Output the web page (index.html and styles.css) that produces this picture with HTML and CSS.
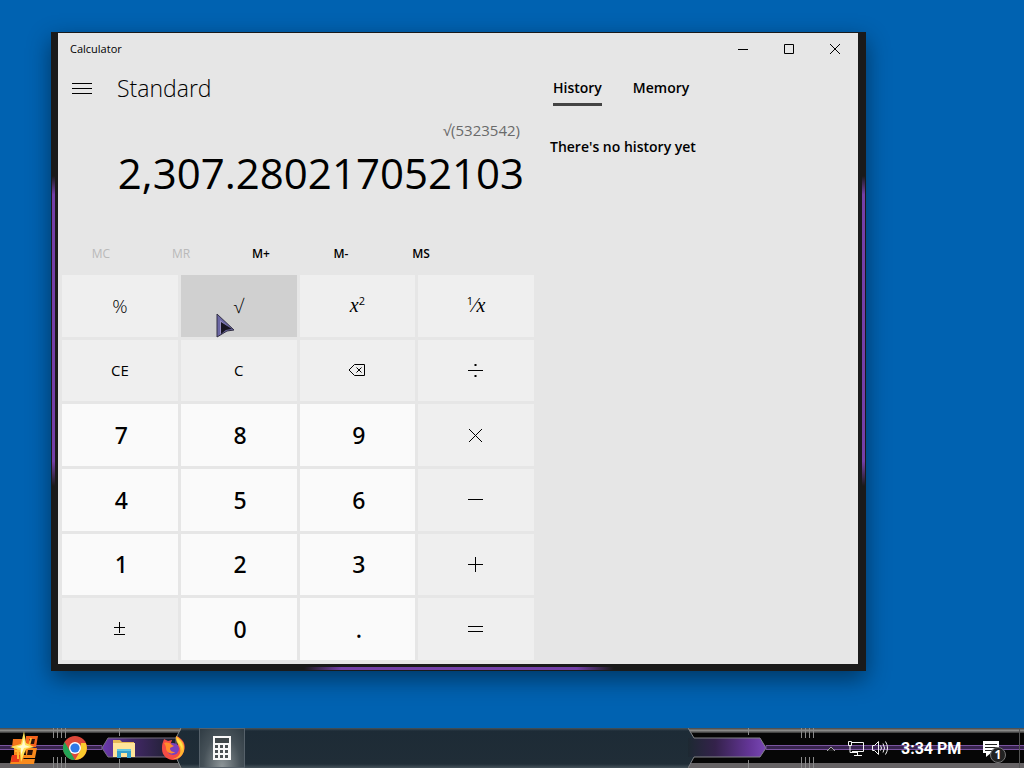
FILE: index.html
```html
<!DOCTYPE html>
<html lang="en">
<head>
    <meta charset="UTF-8">
    <meta name="viewport" content="width=device-width, initial-scale=1.0">
    <title>Calculator</title>
    <link rel="stylesheet" href="styles.css">
</head>
<body>
    <main class="desktop">
        <section class="window">
            <div class="window-body">
                <header class="titlebar">
                    <h1 class="window-title">Calculator</h1>
                    <div class="window-buttons">
                        <button type="button" aria-label="Minimize">
                            <svg width="12" height="12" viewBox="0 0 12 12"><path d="M1 6.5h10"/></svg>
                        </button>
                        <button type="button" aria-label="Maximize">
                            <svg width="12" height="12" viewBox="0 0 12 12"><path d="M1.5 1.5h9v9h-9z"/></svg>
                        </button>
                        <button type="button" aria-label="Close">
                            <svg width="12" height="12" viewBox="0 0 12 12"><path d="M1 1l10 10M11 1L1 11"/></svg>
                        </button>
                    </div>
                </header>

                <div class="content">
                    <div class="calculator">
                        <div class="mode">
                            <button type="button" class="menu-button" aria-label="Menu">
                                <svg width="20" height="12" viewBox="0 0 20 12"><path d="M0 1.5h20M0 6.5h20M0 11.5h20"/></svg>
                            </button>
                            <h2>Standard</h2>
                        </div>
                        <div class="expression">√(5323542)</div>
                        <div class="result">2,307.280217052103</div>
                        <div class="memory-row">
                            <button type="button" disabled>MC</button>
                            <button type="button" disabled>MR</button>
                            <button type="button">M+</button>
                            <button type="button">M-</button>
                            <button type="button">MS</button>
                        </div>
                        <div class="keys">
                            <button type="button" class="key symbol">%</button>
                            <button type="button" class="key symbol hover">√</button>
                            <button type="button" class="key math"><i>x</i><sup>2</sup></button>
                            <button type="button" class="key math"><sup>1</sup>⁄<i>x</i></button>

                            <button type="button" class="key">CE</button>
                            <button type="button" class="key">C</button>
                            <button type="button" class="key" aria-label="Backspace">
                                <svg width="18" height="14" viewBox="0 0 18 14"><path d="M6.5 1.5h10v11h-10L1 7zM8.5 4.5l5 5M13.5 4.5l-5 5"/></svg>
                            </button>
                            <button type="button" class="key" aria-label="Divide">
                                <svg width="16" height="16" viewBox="0 0 16 16"><path d="M0 8.5h15"/><path d="M6.500 3h2M6.500 14h2" stroke-width="2"/></svg>
                            </button>

                            <button type="button" class="key digit">7</button>
                            <button type="button" class="key digit">8</button>
                            <button type="button" class="key digit">9</button>
                            <button type="button" class="key" aria-label="Multiply">
                                <svg width="16" height="16" viewBox="0 0 16 16"><path d="M1 2l13 13M14 2L1 15"/></svg>
                            </button>

                            <button type="button" class="key digit">4</button>
                            <button type="button" class="key digit">5</button>
                            <button type="button" class="key digit">6</button>
                            <button type="button" class="key" aria-label="Subtract">
                                <svg width="16" height="16" viewBox="0 0 16 16"><path d="M0 7.5h15"/></svg>
                            </button>

                            <button type="button" class="key digit">1</button>
                            <button type="button" class="key digit">2</button>
                            <button type="button" class="key digit">3</button>
                            <button type="button" class="key" aria-label="Add">
                                <svg width="16" height="16" viewBox="0 0 16 16"><path d="M0 8.5h15M7.5 1v15"/></svg>
                            </button>

                            <button type="button" class="key" aria-label="Negate">
                                <svg width="12" height="14" viewBox="0 0 12 14"><path d="M0 5.5h11M5.5 0v11M0 12.5h11"/></svg>
                            </button>
                            <button type="button" class="key digit">0</button>
                            <button type="button" class="key digit">.</button>
                            <button type="button" class="key" aria-label="Equals">
                                <svg width="16" height="16" viewBox="0 0 16 16"><path d="M0 5.5h15M0 10.5h15"/></svg>
                            </button>
                        </div>
                    </div>

                    <aside class="side-panel">
                        <nav class="tabs">
                            <button type="button" class="tab active">History</button>
                            <button type="button" class="tab">Memory</button>
                        </nav>
                        <p>There's no history yet</p>
                    </aside>
                </div>
            </div>
        </section>

        <svg class="cursor" width="20" height="25" viewBox="0 0 20 25">
            <path d="M1 1l17 16-7 1L1 24z" fill="#6b67a4" stroke="#333044"/>
            <path d="M4 7l11 9-5 1-6 4z" fill="#9890c4"/>
            <path d="M5 9l11 7-6 1-5 4z" fill="#171421"/>
        </svg>
    </main>

    <footer class="taskbar">
        <div class="apps">
            <svg class="trim" width="182" height="40" viewBox="0 0 182 40">
                <defs>
                    <linearGradient id="fadeLeft"><stop offset="0" stop-color="#6d3ab0"/><stop offset=".4" stop-color="#432868"/><stop offset="1" stop-color="#1b202b"/></linearGradient>
                    <linearGradient id="rail" x2="0" y2="1"><stop offset="0" stop-color="#444"/><stop offset=".5" stop-color="#8a8a88"/><stop offset="1" stop-color="#333"/></linearGradient>
                </defs>
                <path d="M0 0h182l-6 10v19l6 11H0z" fill="#050505"/>
                <path d="M0 0h182l-3 5H0z" fill="url(#rail)"/>
                <path d="M0 35h179l3 5H0z" fill="#666365"/>
                <path d="M-1 17.500h103v4H-1z" fill="#38244f" stroke="#7a549f"/>
                <path d="M102 20l6-10h68v19h-68z" fill="url(#fadeLeft)" stroke="#77717f"/>
                <path d="M181 0l-5 10M176 29l5 11" stroke="#858b8c" fill="none"/>
                <path d="M53.500 0v10M57.500 0v10M61.500 0v10M65.500 0v10M53.500 29v11M57.500 29v11M61.500 29v11M65.500 29v11M119.500 0v8M119.500 31v9" stroke="#8a8a8a"/>
            </svg>
            <button type="button" class="start" aria-label="Start">
                <svg width="34" height="36" viewBox="0 0 34 36">
                    <path d="M18 6h12l-2 11H17z" fill="#f5631c"/>
                    <path d="M5 9h11v8H4z" fill="#f4751c"/>
                    <path d="M6 18h9l-2 7h5l-1-7h12l-2 10H16l-1 1h12l-1 5H2l2-9h2z" fill="#f98a1c"/>
                    <path d="M4 25h8l-1 7H3z" fill="#e93a1a"/>
                    <path d="M21 9h6l-1 5h-5zM20 20h5l-1 5h-5z" fill="#2a120a"/>
                    <path d="M23 8l-2 8M7 21h6M10 18v11" stroke="#ffb632" stroke-width="2"/>
                    <path d="M16 1l2 12 8 4-8 2-5 13-1-12-10-3 11-3z" fill="#ffe35a"/>
                    <path d="M16 8l1 7 5 2-6 1-3 7v-7l-5-1 6-2z" fill="#fffbd0"/>
                </svg>
            </button>
            <button type="button" class="app" aria-label="Chrome">
                <svg width="24" height="24" viewBox="0 0 24 24">
                    <circle cx="12" cy="12" r="12" fill="#dc483a"/>
                    <path d="M1.600 6l5.600 9.500L12 24A12 12 0 0 1 1.600 6z" fill="#23a455"/>
                    <path d="M12 24l5.200-9 .8-8h4.800A12 12 0 0 1 12 24z" fill="#fbca2c"/>
                    <circle cx="12" cy="12" r="6" fill="#fff"/>
                    <circle cx="12" cy="12" r="4.600" fill="#2f79e8"/>
                </svg>
            </button>
            <button type="button" class="app" aria-label="File Explorer">
                <svg width="24" height="22" viewBox="0 0 24 22">
                    <path d="M1 3h7l2 2h12v15H1z" fill="#e7b956"/>
                    <path d="M1 6h22v14H1z" fill="#ffe49a"/>
                    <path d="M5 12h14v9h-4v-5H9v5H5z" fill="#349fcb"/>
                    <path d="M5 12h14v2H5z" fill="#65c7dd"/>
                </svg>
            </button>
            <button type="button" class="app" aria-label="Firefox">
                <svg width="24" height="24" viewBox="0 0 24 24">
                    <path d="M2 6l1-3 4 2 4-1c0 1-1 2-1 3l7 2-1-9c7 4 9 9 7 15-2 6-6 9-11 9S1 20 1 13C1 10 1 8 2 6z" fill="#f44c45"/>
                    <path d="M15 0c7 4 9 9 8 15-2 6-6 8-11 8 7-2 9-7 6-13-1-3-4-5-3-10z" fill="#ffb52f"/>
                    <path d="M16 2c5 4 7 8 5 13 0-4-2-6-4-8-1-1-1-3-1-5z" fill="#ffe34b"/>
                    <circle cx="12" cy="13" r="6" fill="#7941bd"/>
                    <path d="M3 7c4-1 6 0 8 2l2 1-4 2c0 3 2 4 5 4-3 3-9 1-9-4 0-2-1-3-2-5z" fill="#ff8b2b"/>
                </svg>
            </button>
            <button type="button" class="app running" aria-label="Calculator">
                <svg width="20" height="26" viewBox="0 0 20 26">
                    <path d="M1 1h18v24H1z" fill="#f8f8f8"/>
                    <path d="M3 3h14v5H3z" fill="#3f4649"/>
                    <path d="M3 10h3v3H3zM8 10h3v3H8zM13 10h3v3h-3zM3 15h3v3H3zM8 15h3v3H8zM13 15h3v3h-3zM3 20h3v3H3zM8 20h3v3H8zM13 20h3v3h-3z" fill="#4a5053"/>
                </svg>
            </button>
        </div>

        <div class="tray">
            <svg class="trim" width="336" height="40" viewBox="0 0 336 40">
                <defs>
                    <linearGradient id="fadeRight"><stop offset="0" stop-color="#1d2932"/><stop offset=".35" stop-color="#34224b"/><stop offset=".8" stop-color="#653699"/><stop offset="1" stop-color="#7948b5"/></linearGradient>
                </defs>
                <path d="M0 0h336v40H0l6-11V10z" fill="#060606"/>
                <path d="M0 0h336v5H3z" fill="url(#rail)"/>
                <path d="M3 35h333v5H0z" fill="#666365"/>
                <path d="M0 10h72l6 10-6 9H0z" fill="url(#fadeRight)"/>
                <path d="M0 0l6 10h66l6 10-6 9H6L0 40" stroke="#838489" fill="none"/>
                <path d="M78 17.500h260v4H78z" fill="#38244f" stroke="#7a549f"/>
                <path d="M60.500 0v7M60.500 32v8M113.500 0v10M117.500 0v10M121.500 0v10M125.500 0v10M113.500 29v11M117.500 29v11M121.500 29v11M125.500 29v11" stroke="#8a8a8a"/>
                <path d="M331.500 0v40" stroke="#555"/>
            </svg>
            <button type="button" aria-label="Show hidden icons">
                <svg width="8" height="8" viewBox="0 0 8 8"><path d="M0 7l4-4 4 4" fill="#222" stroke="#aaa"/></svg>
            </button>
            <div class="status">
                <button type="button" aria-label="Network">
                    <svg width="18" height="16" viewBox="0 0 18 16"><path d="M5 2.500h11.500v9H5M1.500 1.500h3v4h-3zM3 6v6.500h8M10.500 12v3M7 15.500h8" fill="none" stroke="#f4f4f4"/></svg>
                </button>
                <button type="button" aria-label="Volume">
                    <svg width="18" height="16" viewBox="0 0 18 16"><path d="M1.500 5.500h2l4-4v13l-4-4h-2zM9.500 5.500q2 2.500 0 5M12 3.500q3 4.500 0 9M14.500 1.500q4 6.500 0 13" fill="none" stroke="#f4f4f4"/></svg>
                </button>
            </div>
            <time class="clock">3:34 PM</time>
            <button type="button" class="notifications" aria-label="Notifications">
                <svg width="18" height="17" viewBox="0 0 18 17"><path d="M1 1h16v12H9l-5 4v-4H1z" fill="#fff"/><path d="M3 4.500h12M3 7.500h12M3 10.500h8" stroke="#222"/></svg>
                <span class="badge">1</span>
            </button>
        </div>
    </footer>
</body>
</html>
```
FILE: styles.css
```css
:root {
    --desktop-color: #0062b1;
    --window-color: #e6e6e6;
    --frame-color: #1a1a1a;
    --key-color: #efefef;
    --digit-color: #fafafa;
    --purple: #743fa8;
}

* {
    margin: 0;
    padding: 0;
    box-sizing: border-box;
}

body {
    font-family: "Open Sans", "Noto Sans", sans-serif;
    background-color: var(--desktop-color);
    color: #000;
    height: 100vh;
    display: flex;
    flex-direction: column;
    overflow: hidden;
}

button {
    font: inherit;
    color: inherit;
    background: none;
    border: none;
}

svg {
    display: block;
    flex: none;
}

.desktop {
    position: relative;
    flex: 1;
}

/* Window */
.window {
    position: absolute;
    left: 51px;
    top: 32px;
    padding: 1px 8px 7px 7px;
    background:
        linear-gradient(transparent, var(--purple) 6%, var(--purple) 92%, transparent) 1px 144px / 3px 310px no-repeat,
        linear-gradient(transparent, var(--purple) 6%, var(--purple) 92%, transparent) right 1px top 144px / 3px 310px no-repeat,
        linear-gradient(90deg, transparent, var(--purple) 12%, var(--purple) 88%, transparent) center bottom 1px / 310px 3px no-repeat,
        var(--frame-color);
    box-shadow: 0 8px 22px rgba(0, 0, 0, 0.45);
}

.window-body {
    width: 800px;
    background-color: var(--window-color);
}

.titlebar {
    display: flex;
    justify-content: space-between;
    align-items: center;
    height: 31px;
    padding-left: 12px;
}

.window-title {
    font-size: 11px;
    font-weight: 400;
}

.window-buttons {
    display: flex;
}

.window-buttons button {
    display: flex;
    justify-content: center;
    align-items: center;
    width: 46px;
    height: 30px;
}

.window-body svg {
    fill: none;
    stroke: #000;
}

.content {
    display: flex;
}

.calculator {
    width: 480px;
    padding-bottom: 4px;
}

.mode {
    display: flex;
    align-items: center;
    gap: 25px;
    height: 48px;
    padding-left: 14px;
}

.mode h2 {
    font-size: 23px;
    font-weight: 300;
}

.expression {
    height: 36px;
    padding-right: 18px;
    color: #6a6a6a;
    font-size: 15px;
    font-weight: 400;
    line-height: 36px;
    text-align: right;
}

.result {
    height: 82px;
    padding-right: 14px;
    font-size: 42px;
    line-height: 50px;
    text-align: right;
}

.memory-row {
    display: grid;
    grid-template-columns: repeat(6, 80px);
    height: 45px;
    padding: 2px 0 0 3px;
    font-size: 12px;
    font-weight: 600;
}

.memory-row button:disabled {
    color: #b9b9b9;
    font-weight: 400;
}

.keys {
    display: grid;
    grid-template-columns: repeat(4, 1fr);
    grid-template-rows: repeat(6, 1fr);
    gap: 3px;
    height: 385px;
    padding: 0 4px;
}

.key {
    display: flex;
    justify-content: center;
    align-items: center;
    background-color: var(--key-color);
    font-size: 15px;
}

.key.symbol {
    font-size: 19px;
    font-weight: 300;
}

.key.hover {
    background-color: #d0d0d0;
}

.key.digit {
    padding-left: 3px;
    background-color: var(--digit-color);
    font-family: "Noto Sans", "Open Sans", sans-serif;
    font-size: 23px;
    font-weight: 500;
}

.key.math {
    font-family: "Liberation Serif", serif;
    font-size: 20px;
}

.key sup {
    font-family: "Open Sans", sans-serif;
    font-size: 11px;
    align-self: center;
    padding-bottom: 10px;
}

.side-panel {
    flex: 1;
    padding: 8px 12px;
    font-size: 14px;
    font-weight: 600;
}

.tabs {
    display: flex;
    gap: 31px;
    padding-left: 3px;
}

.tab {
    height: 34px;
    border-bottom: 3px solid transparent;
}

.tab.active {
    border-color: #444;
}

.side-panel p {
    margin-top: 31px;
    line-height: 20px;
}

.cursor {
    position: absolute;
    left: 216px;
    top: 313px;
}

/* Taskbar */
.taskbar {
    display: flex;
    justify-content: space-between;
    height: 40px;
    background: linear-gradient(#46535b, #1d2b36 3px, #202d37 36px, #46535b);
}

.apps,
.tray {
    position: relative;
    display: flex;
    align-items: center;
}

.trim {
    position: absolute;
    left: 0;
    top: 0;
}

.taskbar button {
    position: relative;
    display: flex;
    justify-content: center;
    align-items: center;
}

.start {
    width: 50px;
    height: 40px;
}

.app {
    width: 49px;
    height: 40px;
}

.app.running {
    width: 46px;
    margin-left: 2px;
    background: radial-gradient(ellipse at 50% 100%, #8e9699, #465158 60%, #303c44);
    border: 1px solid #56616a;
}

.tray {
    width: 336px;
    padding: 0 24px 0 139px;
    gap: 12px;
    color: #fff;
}

.status {
    display: flex;
    gap: 6px;
}

.clock {
    position: relative;
    flex: 1;
    font-family: Roboto, "Liberation Sans", sans-serif;
    font-size: 16px;
    font-weight: 700;
}

.badge {
    position: absolute;
    left: 8px;
    top: 7px;
    width: 16px;
    height: 16px;
    border: 1px solid #777;
    border-radius: 50%;
    background-color: #222;
    font-size: 12px;
    font-weight: 700;
    line-height: 14px;
    text-align: center;
}
```
